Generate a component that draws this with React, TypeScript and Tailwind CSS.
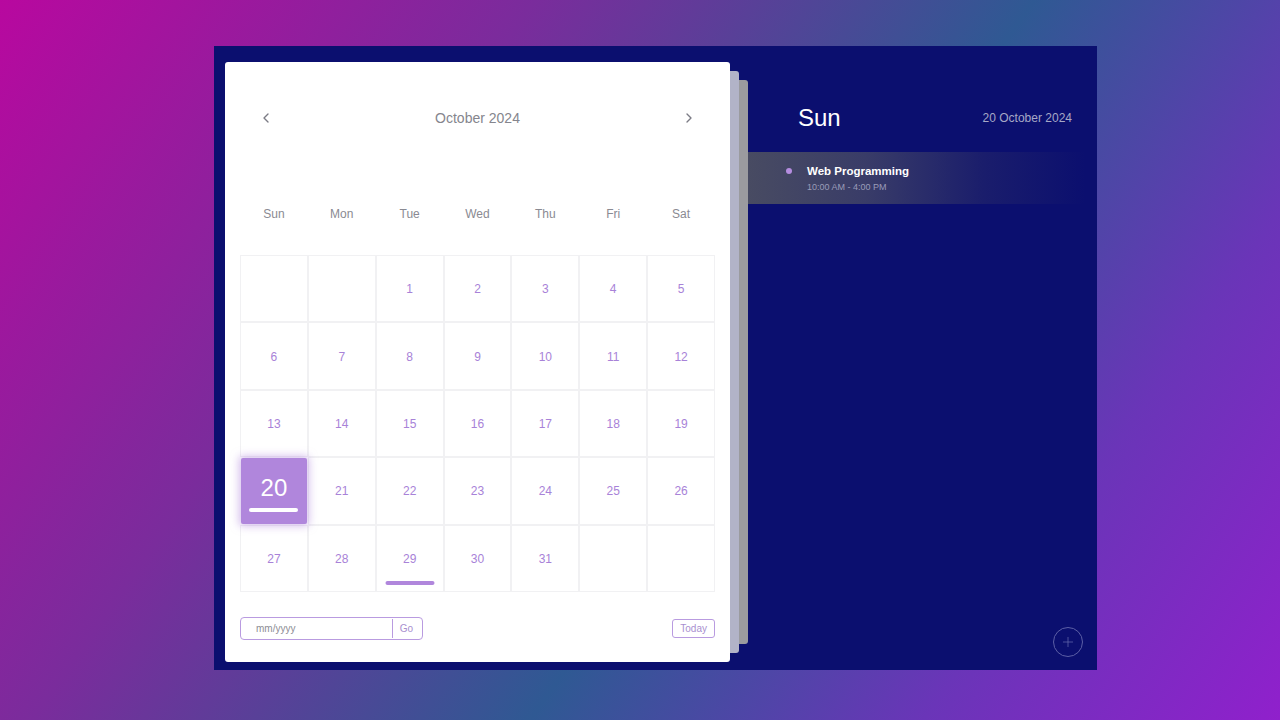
import { ChevronLeft, ChevronRight, Plus } from 'lucide-react';

const weekdays = ['Sun', 'Mon', 'Tue', 'Wed', 'Thu', 'Fri', 'Sat'];

// October 2024 starts on a Tuesday
const cells: (number | null)[] = [
  null, null,
  ...Array.from({ length: 31 }, (_, i) => i + 1),
  null, null,
];

const SELECTED = 20;
const HAS_EVENT = 29;

export default function App() {
  return (
    <div className="min-h-screen w-full bg-[linear-gradient(125deg,#b8089f_0%,#7a2c9c_30%,#2f5993_58%,#6a35b8_80%,#9020cc_100%)] pl-[214px] pt-[46px] font-['Liberation_Sans',Arial,sans-serif]">
      <div className="flex h-[624px] w-[883px] bg-[#0b0f6f]">
        {/* calendar with page stack */}
        <div className="flex pl-[11px] pt-[16px]">
          <div className="relative z-10 flex h-[600px] w-[505px] flex-col rounded-[3px] bg-white px-[15px] pt-[36px]">
            <div className="flex h-[40px] items-center justify-between px-[18px]">
              <ChevronLeft size={16} strokeWidth={2} className="text-[#7b7b85]" />
              <span className="text-[14px] text-[#85858d]">October 2024</span>
              <ChevronRight size={16} strokeWidth={2} className="text-[#7b7b85]" />
            </div>

            <div className="mt-[56px] grid h-[40px] grid-cols-7 items-center">
              {weekdays.map((d) => (
                <span key={d} className="text-center text-[12px] text-[#8a8a92]">{d}</span>
              ))}
            </div>

            <div className="mt-[21px] grid grid-cols-7 grid-rows-[repeat(5,67.4px)]">
              {cells.map((n, i) =>
                n === SELECTED ? (
                  <div
                    key={i}
                    className="relative z-10 m-px flex flex-col items-center justify-center rounded-[2px] bg-[#b086dc] shadow-[0_0_8px_2px_rgba(176,134,220,0.55)]"
                  >
                    <span className="mt-[6px] text-[24px] leading-none text-white">{n}</span>
                    <span className="mt-[8px] h-[4px] w-[49px] rounded-full bg-white" />
                  </div>
                ) : (
                  <div key={i} className="relative flex items-center justify-center border border-[#f1f1f3]">
                    {n !== null && <span className="mt-px text-[12px] text-[#a882d8]">{n}</span>}
                    {n === HAS_EVENT && (
                      <span className="absolute bottom-[6px] left-1/2 h-[4px] w-[49px] -translate-x-1/2 rounded-full bg-[#b086dc]" />
                    )}
                  </div>
                )
              )}
            </div>

            <div className="mt-[25px] flex items-center justify-between">
              <div className="flex h-[23px] w-[183px] items-center rounded-[4px] border border-[#b99be0]">
                <span className="flex-1 pl-[15px] text-[10px] text-[#8d8d95]">mm/yyyy</span>
                <span className="h-[19px] w-px bg-[#b99be0]" />
                <span className="pl-[7px] pr-[9px] text-[10px] text-[#a98fcf]">Go</span>
              </div>
              <span className="flex h-[19px] items-center rounded-[3px] border border-[#b99be0] px-[7px] text-[10px] text-[#a98fcf]">
                Today
              </span>
            </div>
          </div>
          <div className="mt-[9px] h-[582px] w-[9px] rounded-r-[3px] bg-[#b2b3c8]" />
          <div className="mt-[18px] h-[564px] w-[9px] rounded-r-[3px] bg-[#9b9b9f]" />
        </div>

        {/* day detail */}
        <div className="flex flex-1 flex-col">
          <div className="mt-[58px] flex items-center justify-between pl-[50px] pr-[25px]">
            <span className="text-[24px] leading-[28px] text-white">Sun</span>
            <span className="text-[12px] text-[#a6a8c6]">20 October 2024</span>
          </div>

          <div className="mr-[12px] mt-[20px] flex h-[52px] items-start bg-[linear-gradient(90deg,#484b62_0%,#393c68_35%,#1a1d6c_70%,#0b0f6f_100%)] pl-[38px] pt-[11px]">
            <span className="mt-[5px] h-[6px] w-[6px] rounded-full bg-[#b58de0]" />
            <div className="ml-[15px] flex flex-col">
              <span className="text-[11.5px] font-bold text-white">Web Programming</span>
              <span className="mt-[1px] text-[9px] text-[#9a9cb8]">10:00 AM - 4:00 PM</span>
            </div>
          </div>

          <div className="mb-[13px] mr-[14px] mt-auto flex h-[30px] w-[30px] items-center justify-center self-end rounded-full border border-[#5c5fa6]">
            <Plus size={16} strokeWidth={1} className="text-[#6e71b4]" />
          </div>
        </div>
      </div>
    </div>
  );
}
